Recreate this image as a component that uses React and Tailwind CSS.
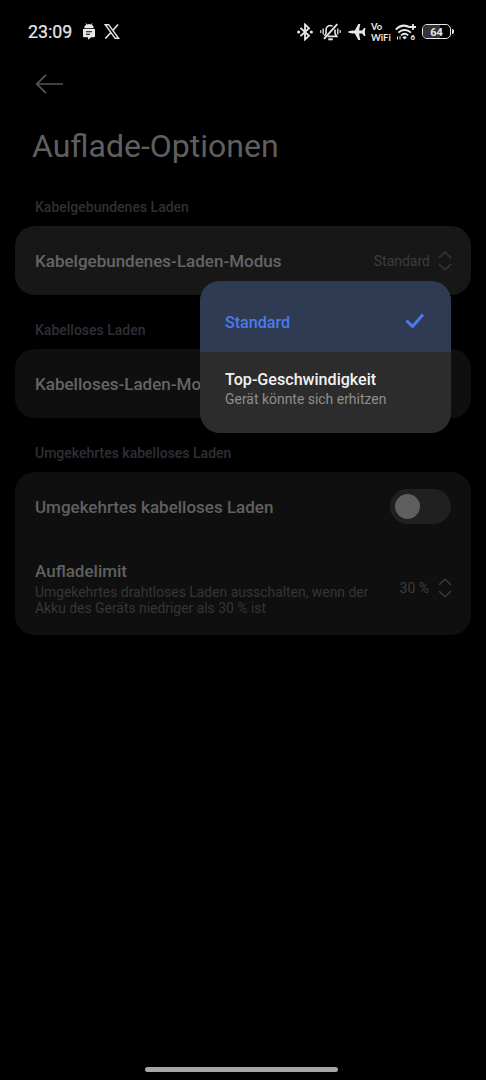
import clsx from 'clsx'

function StatusBar() {
  return (
    <div className="flex h-[63px] items-center justify-between pl-[28px] pr-[32px] text-[#e8e8e8]">
      <div className="flex items-center">
        <span className="w-[45px] text-[17.800px] leading-5 font-normal [-webkit-text-stroke:0.200px_#e8e8e8]">23:09</span>
        <svg className="ml-[10px]" width="12" height="17" viewBox="0 0 12 17" fill="currentColor">
          <path d="M1.3 5.2C1.3 3.5 2.2 2.3 3.3 1.7L2.6.6l.6-.4.8 1.2a5 5 0 0 1 4 0L8.8.2l.6.4-.7 1.1c1.1.6 2 1.8 2 3.5z" />
          <path d="M0 6h12v7.2a1 1 0 0 1-1 1H8.2L5 16.8v-2.6H1a1 1 0 0 1-1-1z" />
          <path d="M3 8.7h6M3 11.2h4" stroke="#000" strokeWidth="1.1" />
        </svg>
        <svg className="ml-[9px]" width="16" height="15" viewBox="0 0 16 15" fill="none" stroke="currentColor">
          <path d="M1.2.7h3.4l10 13.6h-3.4z" strokeWidth="1.4" />
          <path d="M14 .5 9 6.2M6.7 8.8 1.3 14.5" strokeWidth="1.6" />
        </svg>
      </div>

      <div className="flex items-center">
        {/* Bluetooth */}
        <svg width="16" height="18" viewBox="0 0 16 18" fill="none" stroke="currentColor" strokeWidth="1.8">
          <path d="M3.5 4.8 12 12.8 8 16.500V1.500l4 3.700-8.500 8" />
          <circle cx="1.6" cy="9" r="1.5" fill="currentColor" stroke="none" />
          <circle cx="14.4" cy="9" r="1.5" fill="currentColor" stroke="none" />
        </svg>
        {/* Muted bell */}
        <svg className="ml-[7px]" width="21" height="18" viewBox="0 0 21 18" fill="none" stroke="currentColor" strokeWidth="1.6">
          <path d="M12.600 3.100C9 1.300 6 3.600 6 7v3.600l-1.500 2.300M15 6.400v4.400l1.800 2.600H7.600" />
          <path d="M17.300 1.200 4 15.800" strokeWidth="1.8" />
          <path d="M8.300 16.300h4.500" strokeWidth="2" />
          <path d="M3.200 5.500v6M17.800 5.500v6" strokeWidth="1.300" />
          <path d="M.8 7v3M20.200 7v3" strokeWidth="1.100" />
        </svg>
        {/* Airplane */}
        <svg className="ml-[7px]" width="18" height="18" viewBox="0 0 18 18" fill="currentColor">
          <path d="M0 9c1-1 2.600-1.400 4.500-1.500h2.300L10.300 1h1.900l-1.100 6.500h3.200L16 5h1.400l-.6 4 .6 4H16l-1.700-2.500h-3.200l1.100 6.500h-1.900l-3.500-6.500H4.500C2.600 10.400 1 10 0 9z" />
        </svg>
        <div className="ml-[5px] w-[20px] font-[Lato,sans-serif] text-[9.400px] leading-[11px] font-bold">
          <div>Vo</div>
          <div>WiFi</div>
        </div>
        {/* Wi-Fi 6 */}
        <svg className="ml-[4px]" width="22" height="18" viewBox="0 0 22 18" fill="none" stroke="currentColor">
          <path d="M.8 6.600C5 2.200 10.500 1.900 15 4.300" strokeWidth="2" />
          <path d="M3.300 9.600c3.600-3.500 9-3.500 12.600 0M6 12.400c2.300-2.200 5-2.200 7.200 0" strokeWidth="1.900" />
          <path d="m7.400 14.200 2.200 2.400 2.200-2.400c-1.300-1.200-3.100-1.200-4.400 0z" fill="currentColor" stroke="none" />
          <path d="M18 1v6M15 4h6" strokeWidth="1.800" />
          <path d="M2.500 13.500v3M5 13v3.500" strokeWidth="1" />
          <text x="15.500" y="16.800" fontSize="8" fontWeight="700" fill="currentColor" stroke="none">6</text>
        </svg>
        {/* Battery */}
        <div className="ml-[5px] flex items-center">
          <div className="relative flex h-[15px] w-[29px] items-center justify-center overflow-hidden rounded-[5px] border-[1.500px] border-[#e8e8e8]">
            <div className="absolute inset-y-0 left-0 w-[64%] bg-[#333]" />
            <span className="relative pt-px text-[11px] leading-[13px] font-bold">64</span>
          </div>
          <div className="ml-px h-[5px] w-[2px] rounded-r-full bg-[#e8e8e8]" />
        </div>
      </div>
    </div>
  )
}

function UpDown() {
  return (
    <svg className="-mr-px shrink-0" width="14" height="20" viewBox="0 0 14 20" fill="none" stroke="#343434" strokeWidth="1.600">
      <path d="M1 6.800 7 1.200l6 5.600M1 13.200l6 5.600 6-5.600" />
    </svg>
  )
}

function SectionLabel({ children }) {
  return <h2 className="pl-[35px] text-[14px] leading-5 font-medium text-[#302f37]">{children}</h2>
}

function Card({ children, className }) {
  return <div className={clsx('mx-[15px] rounded-[20px] px-5', className)}>{children}</div>
}

function ModeRow({ title, value }) {
  return (
    <div className="flex h-[69px] items-center">
      <span className="flex-1 text-[17px] leading-5 font-medium text-[#656565]">{title}</span>
      <span className="mr-[8px] text-[14px] leading-5 text-[#3d3d3d]">{value}</span>
      <UpDown />
    </div>
  )
}

function ModeMenu() {
  return (
    <div className="absolute top-[281px] left-[200px] h-[152px] w-[251px] overflow-hidden rounded-[20px] bg-[#2c2c2c]">
      <div className="flex h-[71px] items-center justify-between bg-[#2f3a53] pt-[12px] pr-[26px] pl-[25px] text-[#4b7bec]">
        <span className="text-[16.100px] leading-5 font-medium">Standard</span>
        <svg className="-mt-[3px]" width="20" height="16" viewBox="0 0 20 16" fill="none" stroke="currentColor" strokeWidth="3">
          <path d="m1.500 7.500 6 6L18 1.500" strokeLinejoin="round" />
        </svg>
      </div>
      <div className="pt-[18px] pl-[25px]">
        <div className="text-[16.100px] leading-5 font-medium text-[#f2f2f2]">Top-Geschwindigkeit</div>
        <div className="text-[13.950px] leading-[18px] text-[#8e8e8e]">Gerät könnte sich erhitzen</div>
      </div>
    </div>
  )
}

export default function App() {
  return (
    <div className="relative flex h-[1080px] w-[486px] flex-col overflow-hidden bg-black font-[Roboto,sans-serif]">
      <StatusBar />

      <header>
        <svg className="mt-[11px] ml-[35px]" width="29" height="20" viewBox="0 0 29 20" fill="none" stroke="#575757" strokeWidth="1.700">
          <path d="M11 .8 1.800 10l9.200 9.200M1.800 10H28" />
        </svg>
        <h1 className="mt-[32px] pl-[32px] text-[32px] leading-10 text-[#5f5f5f]">Auflade-Optionen</h1>
      </header>

      <main className="mt-[31px]">
        <SectionLabel>Kabelgebundenes Laden</SectionLabel>
        <Card className="mt-[9px] mb-[25px] bg-[#171717]">
          <ModeRow title="Kabelgebundenes-Laden-Modus" value="Standard" />
        </Card>

        <SectionLabel>Kabelloses Laden</SectionLabel>
        <Card className="mt-[9px] mb-[25px] bg-[#0f0f0f]">
          <ModeRow title="Kabelloses-Laden-Modus" value="Standard" />
        </Card>

        <SectionLabel>Umgekehrtes kabelloses Laden</SectionLabel>
        <Card className="mt-[9px] h-[163px] bg-[#0f0f0f]">
          <div className="flex h-[69px] items-center justify-between">
            <span className="text-[17px] leading-5 font-medium text-[#606060]">Umgekehrtes kabelloses Laden</span>
            <div className="flex h-[35px] w-[61px] items-center rounded-full bg-[#202020] pl-[5px]">
              <div className="size-[25px] rounded-full bg-[#5f5f5f]" />
            </div>
          </div>
          <div className="flex h-[94px] items-center">
            <div className="flex-1">
              <div className="text-[17px] leading-5 font-medium text-[#606060]">Aufladelimit</div>
              <p className="mt-[3px] w-[345px] text-[13.900px] leading-4 text-[#363636]">
                Umgekehrtes drahtloses Laden ausschalten, wenn der Akku des Geräts niedriger als 30 % ist
              </p>
            </div>
            <span className="mr-[9px] text-[14px] leading-5 whitespace-nowrap text-[#3d3d3d]">30 %</span>
            <UpDown />
          </div>
        </Card>
      </main>

      <ModeMenu />

      {/* Home indicator */}
      <div className="mx-auto mt-auto mb-[8px] h-[5px] w-[193px] translate-x-[-2px] rounded-full bg-[#a6a6a6]" />
    </div>
  )
}
